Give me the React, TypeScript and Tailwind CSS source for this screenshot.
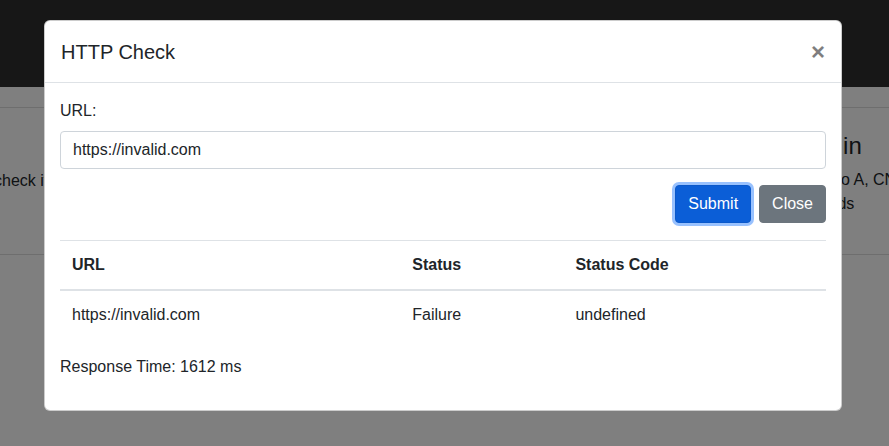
import React from "react";

const results = [
  { url: "https://invalid.com", status: "Failure", code: "undefined" },
];

const HttpCheckModal = () => {
  return (
    <div className="absolute left-[44px] top-5 w-[798px] rounded-[6px] border border-black/20 bg-white text-[#212529]">
      <div className="flex items-center justify-between border-b border-[#dee2e6] px-4 pb-[15px] pt-4">
        <h5 className="text-[20px] font-medium leading-[30px]">HTTP Check</h5>
        <button className="text-[24px] font-bold leading-none text-black opacity-50">
          ×
        </button>
      </div>

      <div className="px-[15px] pb-[15px] pt-4">
        <label className="mb-2 block text-base leading-6">URL:</label>
        <input
          readOnly
          value="https://invalid.com"
          className="mb-4 block h-[38px] w-full rounded border border-[#ced4da] px-3 text-base text-[#212529] outline-none"
        />

        <div className="mb-[17px] flex justify-end gap-2">
          <button className="h-[38px] rounded border border-[#0a58ca] bg-[#0b5ed7] px-3 text-base text-white shadow-[0_0_0_3px_rgba(49,132,253,0.5)]">
            Submit
          </button>
          <button className="h-[38px] rounded border border-[#6c757d] bg-[#6c757d] px-3 text-base text-white">
            Close
          </button>
        </div>

        <table className="mb-4 w-full border-collapse text-left text-base">
          <thead>
            <tr>
              <th className="border-t border-b-2 border-[#dee2e6] p-3 font-bold leading-6">
                URL
              </th>
              <th className="border-t border-b-2 border-[#dee2e6] p-3 font-bold leading-6">
                Status
              </th>
              <th className="border-t border-b-2 border-[#dee2e6] p-3 font-bold leading-6">
                Status Code
              </th>
            </tr>
          </thead>
          <tbody>
            {results.map((r) => (
              <tr key={r.url}>
                <td className="p-3 leading-6">{r.url}</td>
                <td className="p-3 leading-6">{r.status}</td>
                <td className="p-3 leading-6">{r.code}</td>
              </tr>
            ))}
          </tbody>
        </table>

        <p className="mb-4 text-base leading-6">Response Time: 1612 ms</p>
      </div>
    </div>
  );
};

const App = () => {
  return (
    <div className="relative h-[446px] w-full overflow-hidden bg-white font-['Liberation_Sans',Arial,sans-serif] text-[#212529]">
      {/* page behind the modal */}
      <nav className="h-[87px] bg-[#2f2f2f]" />
      <div className="mt-5 flex h-[148px] overflow-hidden border-y border-[#dcdcdc]">
        <div className="w-[801px] shrink-0 pt-[61px] text-base leading-6">
          <p className="-ml-[6px] whitespace-nowrap">check if a site is up</p>
        </div>
        <div className="whitespace-nowrap pt-[23px]">
          <h4 className="ml-[2px] mb-[8px] text-[24px] font-medium leading-[29px]">
            Login
          </h4>
          <p className="text-base leading-6">
            Map to A, CNAME
            <br />
            records
          </p>
        </div>
      </div>

      <div className="absolute inset-0 bg-black/50" />
      <HttpCheckModal />
    </div>
  );
};

export default App;
